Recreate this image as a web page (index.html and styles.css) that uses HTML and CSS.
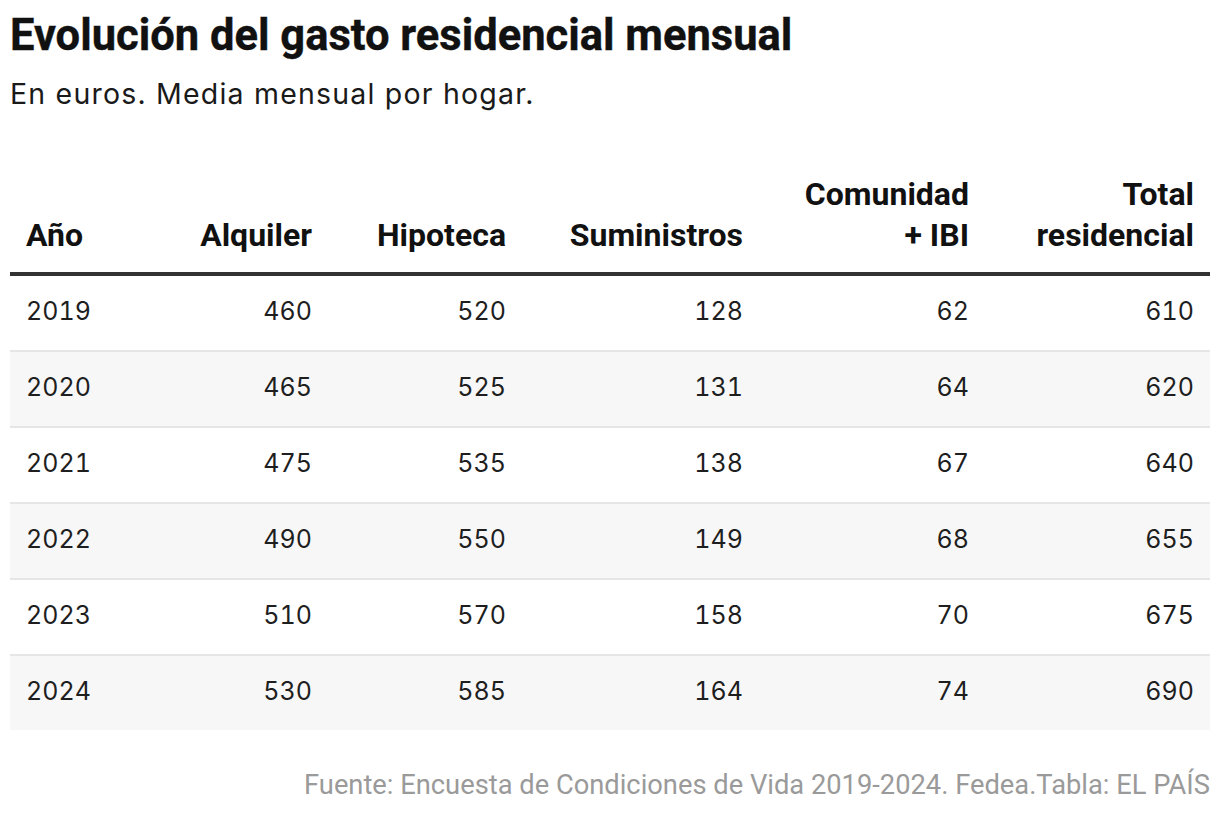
FILE: index.html
```html
<!DOCTYPE html>
<html lang="es">
<head>
<meta charset="utf-8">
<title>Evolución del gasto residencial mensual</title>
<link rel="stylesheet" href="styles.css">
</head>
<body>
<main class="chart">
  <h1 class="title">Evolución del gasto residencial mensual</h1>
  <p class="subtitle">En euros. Media mensual por hogar.</p>
  <div class="table">
    <div class="row head">
      <div class="cell left">Año</div>
      <div class="cell">Alquiler</div>
      <div class="cell">Hipoteca</div>
      <div class="cell">Suministros</div>
      <div class="cell">Comunidad<br>+ IBI</div>
      <div class="cell">Total<br>residencial</div>
    </div>
    <div class="row">
      <div class="cell left">2019</div><div class="cell">460</div><div class="cell">520</div><div class="cell">128</div><div class="cell">62</div><div class="cell">610</div>
    </div>
    <div class="row alt">
      <div class="cell left">2020</div><div class="cell">465</div><div class="cell">525</div><div class="cell">131</div><div class="cell">64</div><div class="cell">620</div>
    </div>
    <div class="row">
      <div class="cell left">2021</div><div class="cell">475</div><div class="cell">535</div><div class="cell">138</div><div class="cell">67</div><div class="cell">640</div>
    </div>
    <div class="row alt">
      <div class="cell left">2022</div><div class="cell">490</div><div class="cell">550</div><div class="cell">149</div><div class="cell">68</div><div class="cell">655</div>
    </div>
    <div class="row">
      <div class="cell left">2023</div><div class="cell">510</div><div class="cell">570</div><div class="cell">158</div><div class="cell">70</div><div class="cell">675</div>
    </div>
    <div class="row alt last">
      <div class="cell left">2024</div><div class="cell">530</div><div class="cell">585</div><div class="cell">164</div><div class="cell">74</div><div class="cell">690</div>
    </div>
  </div>
  <p class="source">Fuente: Encuesta de Condiciones de Vida 2019-2024. Fedea.Tabla: EL PAÍS</p>
</main>
</body>
</html>
```
FILE: styles.css
```css
html, body {
  margin: 0;
  padding: 0;
  background: #ffffff;
}

.chart {
  padding: 10px 10px 0 10px;
  color: #121212;
  font-family: Roboto, "Liberation Sans", sans-serif;
}

.title {
  margin: 0;
  font-family: Roboto, "Liberation Sans", sans-serif;
  font-weight: 700;
  font-size: 43.5px;
  line-height: 52.8px;
  color: #111111;
  -webkit-text-stroke: 0.4px #111111;
}

.subtitle {
  margin: 13px 0 0 0;
  font-family: Inter, "Liberation Sans", sans-serif;
  font-weight: 400;
  font-size: 28.5px;
  line-height: 36px;
  letter-spacing: 1.2px;
  color: #1a1a1a;
}

.table {
  margin-top: 62px;
  display: flex;
  flex-direction: column;
}

.row {
  display: grid;
  grid-template-columns: 170px 148px 194px 237px 226px 225px;
  height: 74px;
  border-bottom: 2px solid #e6e6e6;
  align-items: center;
  font-family: Inter, "Liberation Sans", sans-serif;
  font-size: 25px;
  font-variant-numeric: tabular-nums;
  color: #1e1e1e;
}

.row .cell {
  padding: 0 16px 4px 16px;
  text-align: right;
}

.row .cell.left {
  text-align: left;
}

.row.alt {
  background: #f7f7f7;
}

.row.last {
  border-bottom: none;
}

.row.head {
  height: auto;
  align-items: end;
  border-bottom: 4px solid #333333;
  font-family: Roboto, "Liberation Sans", sans-serif;
  font-weight: 700;
  font-size: 32px;
  line-height: 41px;
  font-variant-numeric: normal;
  color: #111111;
}

.row.head .cell {
  padding: 0 16px 16px 16px;
}

.source {
  margin: 39px 0 0 0;
  text-align: right;
  font-family: Roboto, "Liberation Sans", sans-serif;
  font-size: 27.3px;
  line-height: 32px;
  color: #9a9a9a;
}
```
